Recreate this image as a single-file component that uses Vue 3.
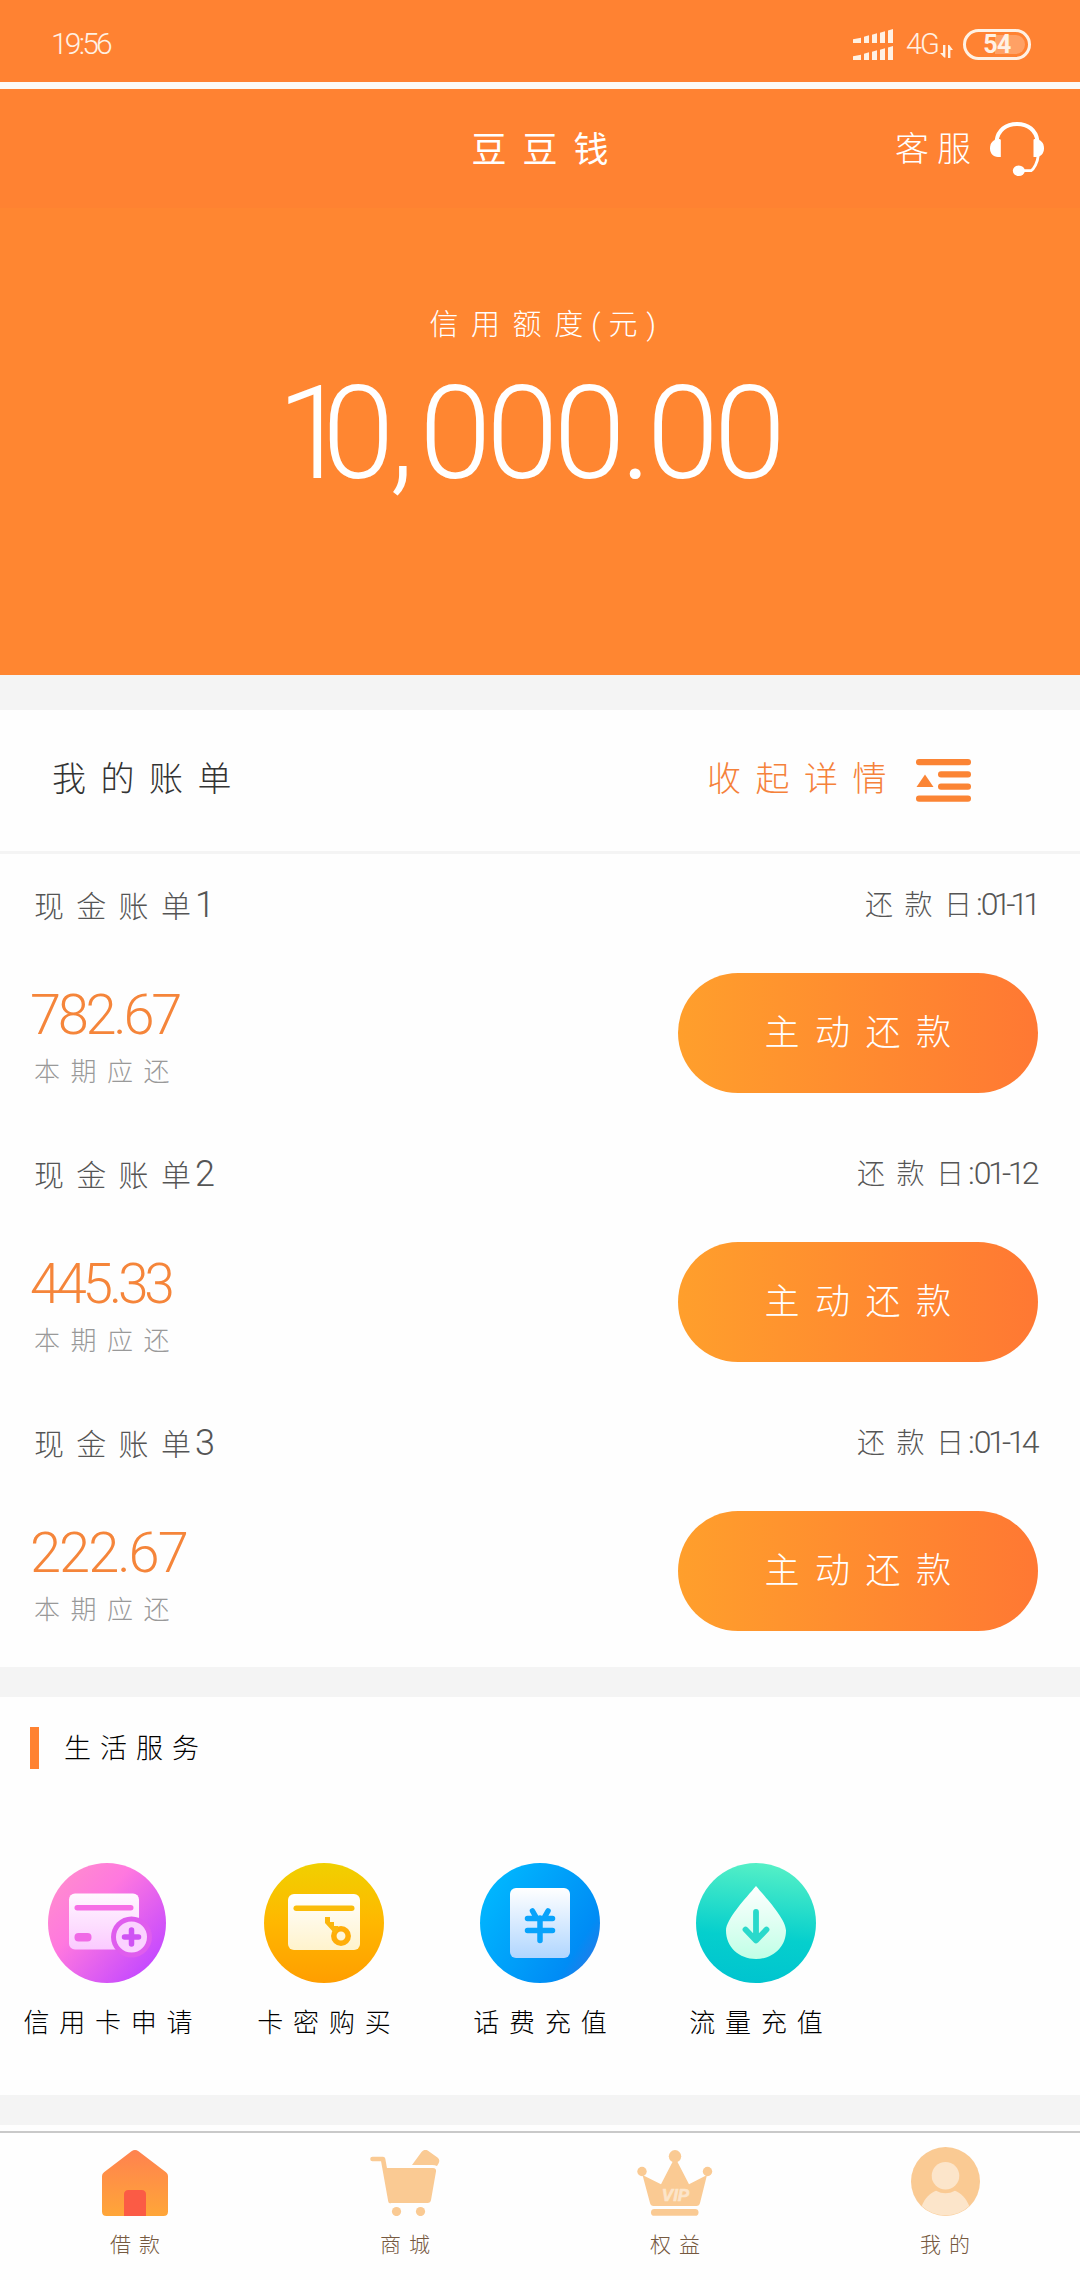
<script setup>
const signalBars = [
  { x: 0, w: 8, h: 5.3 },
  { x: 11, w: 5, h: 7.7 },
  { x: 19, w: 5, h: 9.7 },
  { x: 27, w: 5, h: 11.7 },
  { x: 35, w: 5, h: 14 },
]

const bills = [
  { no: '1', due: '01-11', amount: '782.67' },
  { no: '2', due: '01-12', amount: '445.33' },
  { no: '3', due: '01-14', amount: '222.67' },
]
</script>

<template>
  <div class="screen">
    <div class="status">
      <span class="clock">19:56</span>
      <div class="status-right">
        <svg class="signal" width="40" height="31" viewBox="0 0 40 31" fill="#fff1e4">
          <template v-for="b in signalBars" :key="b.x">
            <path :d="`M${b.x} 14V${15.5 - b.h}L${b.x + b.w} ${14 - b.h}V14Z`" />
            <path :d="`M${b.x} 31V${32.5 - b.h}L${b.x + b.w} ${31 - b.h}V31Z`" />
          </template>
        </svg>
        <span class="net">4G</span>
        <svg class="updown" width="13" height="13" viewBox="0 0 13 13" fill="#fff1e4">
          <path d="M3 0h2.400v12.500H4.200L0 8h3zM8 13h2.400V5H13L9.300 0H8z" />
        </svg>
        <div class="battery"><i></i><b>54</b></div>
      </div>
    </div>
    <div class="strip"></div>

    <header class="header">
      <span class="side"></span>
      <h1>豆豆钱</h1>
      <div class="side service">
        <span>客服</span>
        <svg width="54" height="54" viewBox="0 0 54 54">
          <path d="M6.500 19C8 8 16 2 27 2s19 6 20.500 17" fill="none" stroke="#fff" stroke-width="4" />
          <path d="M10 17C3 17 0 21 0 26.300S3 35 8 35h2.800V18z" fill="#fff" />
          <path d="M44 17C51 17 54 21 54 26.300S51 35 46 35h-2.500V18z" fill="#fff" />
          <path d="M48.300 33C47.500 41 44 47 41 48.700H33" fill="none" stroke="#fff" stroke-width="2.800" />
          <ellipse cx="28.800" cy="48.700" rx="6" ry="5.300" fill="#fff" />
        </svg>
      </div>
    </header>

    <section class="hero">
      <p class="hero-label">信用额<span class="tight">度(</span><span class="unit">元</span>)</p>
      <p class="hero-sum"><span class="one">1</span>0<span class="comma">,</span>000.00</p>
    </section>

    <section class="bills">
      <div class="bills-head">
        <h2>我的账单</h2>
        <div class="toggle">
          <span>收起详情</span>
          <svg width="55" height="43" viewBox="0 0 55 43" fill="#fb8434">
            <rect width="55" height="6.300" rx="3" />
            <rect x="22" y="12.200" width="33" height="6.300" rx="3" />
            <rect x="22" y="24.500" width="33" height="6.300" rx="3" />
            <rect y="36.500" width="55" height="6.300" rx="3" />
            <path d="M9 15.500L17.500 28H.5z" />
          </svg>
        </div>
      </div>
      <article v-for="b in bills" :key="b.no" class="bill">
        <div class="bill-top">
          <h3>现金账<span class="last">单</span><span class="num">{{ b.no }}</span></h3>
          <span class="due">还款<span class="last">日</span><span class="num"><span class="colon">:</span>{{ b.due }}</span></span>
        </div>
        <div class="bill-main">
          <div>
            <p class="amount">{{ b.amount }}</p>
            <p class="note">本期应还</p>
          </div>
          <button class="pay">主动还款</button>
        </div>
      </article>
    </section>

    <section class="life">
      <h2 class="life-title">生活服务</h2>
      <div class="services">
        <div class="service-item">
          <svg width="120" height="120" viewBox="0 0 120 120">
            <defs>
              <linearGradient id="pk" x1=".1" y1=".15" x2=".88" y2=".85"><stop offset="0" stop-color="#ff8ad0" /><stop offset=".35" stop-color="#ff78df" /><stop offset="1" stop-color="#c549ff" /></linearGradient>
              <linearGradient id="pkc" x1="0" y1="0" x2="0" y2="1"><stop offset="0" stop-color="#fff8ff" /><stop offset="1" stop-color="#fbcaff" /></linearGradient>
            </defs>
            <ellipse cx="59" cy="60" rx="59" ry="60" fill="url(#pk)" />
            <rect x="21" y="30.500" width="70" height="56" rx="6" fill="url(#pkc)" />
            <rect x="26.500" y="42" width="59" height="5.500" rx="2.700" fill="#f66ee6" />
            <rect x="26.500" y="70" width="17" height="8.500" rx="4" fill="#f06ae6" />
            <circle cx="83.500" cy="74" r="20.500" fill="#df5dee" />
            <circle cx="83.500" cy="74" r="15.500" fill="#fbd2ff" />
            <path d="M83.500 67v14M76.500 74h14" stroke="#cf52f4" stroke-width="5.500" stroke-linecap="round" />
          </svg>
          <span>信用卡申请</span>
        </div>
        <div class="service-item">
          <svg width="120" height="120" viewBox="0 0 120 120">
            <defs>
              <linearGradient id="ye" x1="0" y1="0" x2="0" y2="1"><stop offset="0" stop-color="#f0d000" /><stop offset=".5" stop-color="#ffb700" /><stop offset="1" stop-color="#ff9e00" /></linearGradient>
              <linearGradient id="yec" x1="0" y1="0" x2="0" y2="1"><stop offset="0" stop-color="#fff" /><stop offset="1" stop-color="#fff3cc" /></linearGradient>
            </defs>
            <circle cx="60" cy="60" r="60" fill="url(#ye)" />
            <rect x="24" y="31" width="72" height="56" rx="6" fill="url(#yec)" />
            <rect x="29.500" y="42.500" width="61" height="5.500" rx="2.700" fill="#fabc08" />
            <circle cx="77" cy="73" r="7.200" fill="none" stroke="#ffad08" stroke-width="5.500" />
            <path d="M61 54h5v5h4v4h4v4l-3 4-10-11z" fill="#fbb60d" />
          </svg>
          <span>卡密购买</span>
        </div>
        <div class="service-item">
          <svg width="120" height="120" viewBox="0 0 120 120">
            <defs>
              <linearGradient id="bl" x1="0" y1=".2" x2=".95" y2=".8"><stop offset="0" stop-color="#00b9ff" /><stop offset=".85" stop-color="#008cf5" /><stop offset="1" stop-color="#217de9" /></linearGradient>
              <linearGradient id="blc" x1="0" y1="0" x2="0" y2="1"><stop offset="0" stop-color="#fff" /><stop offset="1" stop-color="#b0d6ff" /></linearGradient>
            </defs>
            <circle cx="60" cy="60" r="60" fill="url(#bl)" />
            <rect x="30" y="25" width="60" height="70" rx="6" fill="url(#blc)" />
            <path d="M52.500 48l4 7M68 48l-4 7M47.500 55.500h25M47.500 67.500h25M60 55v22.500" fill="none" stroke="#08a3fb" stroke-width="5.500" stroke-linecap="round" />
          </svg>
          <span>话费充值</span>
        </div>
        <div class="service-item">
          <svg width="120" height="120" viewBox="0 0 120 120">
            <defs>
              <linearGradient id="gr" x1=".55" y1="0" x2=".45" y2="1"><stop offset="0" stop-color="#55f0c6" /><stop offset=".62" stop-color="#05cfcd" /><stop offset="1" stop-color="#00c4cf" /></linearGradient>
              <linearGradient id="grc" x1="0" y1="0" x2="0" y2="1"><stop offset="0" stop-color="#fff" /><stop offset="1" stop-color="#c0ffe6" /></linearGradient>
            </defs>
            <circle cx="60" cy="60" r="60" fill="url(#gr)" />
            <path d="M60 23C70 35 90 56 90 67.500C90 84 77 96 60 96S30 84 30 67.500C30 56 50 35 60 23z" fill="url(#grc)" />
            <path d="M60 49v26M49.500 66.500L60 77.500L70.500 66.500" fill="none" stroke="#2ad9cb" stroke-width="5.800" stroke-linecap="round" stroke-linejoin="round" />
          </svg>
          <span>流量充值</span>
        </div>
      </div>
    </section>
    <div class="gap-band"></div>

    <nav class="tabs">
      <div class="tab">
        <svg width="66" height="66" viewBox="0 0 66 66">
          <defs><linearGradient id="hs" x1="0" y1="0" x2="0" y2="1"><stop offset="0" stop-color="#ff824f" /><stop offset="1" stop-color="#ffa638" /></linearGradient></defs>
          <path d="M29.500 1.200Q33-1.200 36.500 1.200L64 22.200Q66 23.700 66 26V61.500Q66 66 61.500 66H4.500Q0 66 0 61.500V26Q0 23.700 2 22.200z" fill="url(#hs)" />
          <path d="M22 66V44.500Q22 40 26.500 40h13Q44 40 44 44.500V66z" fill="#fb5b45" />
        </svg>
        <span>借款</span>
      </div>
      <div class="tab">
        <svg width="70" height="66" viewBox="0 0 70 66" fill="#faca93">
          <path d="M2.500 9H13L20.500 51" fill="none" stroke="#faca93" stroke-width="4.600" stroke-linecap="round" stroke-linejoin="round" />
          <path d="M15 18H63Q66.500 18 66 21.500L61 50Q60.500 53 57.500 53H22Q19.200 53 18.500 50z" />
          <path d="M42 15L51.500 2Q54.500-1.500 58 .7L67.500 7.500Q70.500 10 68.500 13.500L67 16Q65 15 62 15z" />
          <circle cx="26.500" cy="61.500" r="4.600" /><circle cx="50.500" cy="61.500" r="4.600" />
        </svg>
        <span>商城</span>
      </div>
      <div class="tab">
        <svg width="76" height="66" viewBox="0 0 76 66" fill="#faca93">
          <circle cx="38" cy="6.300" r="6.200" /><circle cx="5" cy="21.500" r="4.700" /><circle cx="70.500" cy="21.500" r="4.700" />
          <path d="M5.500 25L24 34.300L35.500 12h5L52 34.300L70 25L63 53Q62.300 56 59.500 56H16.500Q13.700 56 13 53z" />
          <rect x="14" y="59" width="47.500" height="6.800" rx="3.400" />
          <text x="38.500" y="51" text-anchor="middle" class="vip">VIP</text>
        </svg>
        <span>权益</span>
      </div>
      <div class="tab">
        <svg class="avatar" width="69" height="69" viewBox="0 0 69 69">
          <circle cx="34.500" cy="34.500" r="34.500" fill="#faca93" />
          <circle cx="34.500" cy="28.700" r="13.800" fill="#fce5ca" />
          <path d="M10.700 59C14 51 19 46 25 43.700Q34.500 49 44 43.700C50 46 55 51 58.300 59A34.500 34.500 0 0 1 10.700 59z" fill="#fce5ca" />
        </svg>
        <span>我的</span>
      </div>
    </nav>
  </div>
</template>

<style>
body { margin: 0; background: #fefefe; }
</style>

<style scoped>
.screen {
  width: 1080px;
  height: 2280px;
  display: flex;
  flex-direction: column;
  overflow: hidden;
  background: #fefefe;
  font-family: Roboto, "Noto Sans CJK SC", sans-serif;
  font-weight: 300;
}
h1, h2, h3, p { margin: 0; font-weight: inherit; }
svg { display: block; flex: none; }

.status {
  height: 82px;
  box-sizing: border-box;
  padding: 0 49px 0 51px;
  display: flex;
  justify-content: space-between;
  background: #ff8232;
  color: #fff1e4;
}
.clock { font-size: 30px; line-height: 88px; letter-spacing: -2.800px; }
.status-right { display: flex; align-items: flex-start; }
.signal { margin-top: 29px; }
.net { margin-left: 13px; width: 34px; font-size: 29px; line-height: 88px; letter-spacing: -2px; }
.updown { margin-top: 45px; }
.battery {
  position: relative;
  width: 68px;
  height: 31px;
  box-sizing: border-box;
  margin: 29px 0 0 10px;
  border: 3px solid #fff1e4;
  border-radius: 16px;
  text-align: center;
}
.battery i {
  position: absolute;
  right: 3px;
  top: 3px;
  width: 30px;
  height: 19px;
  border-radius: 0 10px 10px 0;
  background: rgba(255, 255, 255, .25);
}
.battery b { position: relative; display: block; font-size: 25px; font-weight: 700; line-height: 26px; letter-spacing: -.5px; }

.strip { height: 7px; background: #fcfaf6; }

.header {
  height: 119px;
  display: flex;
  align-items: center;
  background: #ff8232;
  color: #fff;
}
.side { flex: 1 1 0; width: 0; }
.header h1 { font-size: 35px; line-height: 113px; padding-top: 3px; letter-spacing: 16px; margin-right: -16px; font-weight: 400; }
.service { display: flex; justify-content: flex-end; align-items: center; }
.service svg { margin-right: 36px; }
.service span { font-size: 34px; line-height: 50px; letter-spacing: 8px; margin-right: 11px; }

.hero { height: 467px; background: #ff8631; color: #fff; text-align: center; }
.hero-label { padding: 92px 0 0 18px; font-size: 29px; line-height: 50px; letter-spacing: 12.500px; }
.tight { letter-spacing: 8px; }
.unit { letter-spacing: 9px; }
.hero-sum { margin-top: 9px; font-size: 130px; line-height: 150px; letter-spacing: -5px; }
.one { letter-spacing: -27px; margin-left: -22px; }
.comma { letter-spacing: 5px; }

.bills { border-top: 35px solid #f4f4f4; padding-bottom: 6px; }
.bills-head {
  height: 144px;
  box-sizing: border-box;
  border-bottom: 3px solid #f4f4f4;
  padding: 0 109px 0 52px;
  display: flex;
  justify-content: space-between;
  align-items: center;
}
.bills-head h2 { font-size: 34px; line-height: 50px; padding-bottom: 3px; letter-spacing: 14.500px; color: #333; }
.toggle { display: flex; align-items: center; color: #f5813a; }
.toggle span { font-size: 34px; line-height: 50px; padding-bottom: 3px; letter-spacing: 14.500px; margin-right: 15px; }

.bill { height: 269px; }
.bill-top {
  height: 119px;
  display: flex;
  justify-content: space-between;
  padding: 0 44px 0 34px;
}
.bill-top h3 { font-size: 30px; line-height: 103px; letter-spacing: 12.300px; color: #555; }
.bill-top h3 .last { letter-spacing: 4px; }
.bill-top h3 .num { font-size: 36px; letter-spacing: 0; }
.due { font-size: 28px; line-height: 101px; letter-spacing: 11.500px; color: #555; }
.due .last { letter-spacing: 4px; }
.due .num { font-size: 32px; letter-spacing: -3.600px; }
.due .colon { letter-spacing: -1px; }
.bill:nth-of-type(1) .due .num { letter-spacing: -5px; }
.bill:nth-of-type(1) .due .colon { letter-spacing: -2px; }
.bill-main { display: flex; justify-content: space-between; padding: 0 42px 0 30px; }
.amount { font-size: 56px; line-height: 60px; letter-spacing: -3.300px; color: #f5853a; margin-top: 12px; }
.bill:nth-of-type(2) .amount { font-size: 55px; letter-spacing: -4.200px; }
.bill:nth-of-type(3) .amount { letter-spacing: -2px; }
.note { font-size: 26px; line-height: 36px; letter-spacing: 10.500px; color: #999; margin: 9px 0 0 4px; }
.pay {
  width: 360px;
  height: 120px;
  border: 0;
  padding: 0 0 7px 15px;
  border-radius: 60px;
  background: linear-gradient(90deg, #ff9f2c, #ff7833);
  color: #fff;
  font: 300 35px Roboto, "Noto Sans CJK SC", sans-serif;
  letter-spacing: 15.500px;
}

.life { height: 368px; border-top: 30px solid #f4f4f4; padding-top: 30px; }
.life-title {
  height: 42px;
  margin-left: 30px;
  padding-left: 25px;
  border-left: 9px solid #ff8232;
  font-size: 27px;
  line-height: 44px;
  letter-spacing: 9px;
  color: #000;
}
.services { display: flex; margin-top: 94px; }
.service-item { width: 216px; display: flex; flex-direction: column; align-items: center; }
.service-item span { margin-top: 20px; font-size: 26px; line-height: 40px; letter-spacing: 9.800px; margin-right: -9.800px; color: #000; white-space: nowrap; }

.gap-band { height: 30px; background: #f4f4f4; flex: none; }
.tabs { margin-top: 6px; height: 147px; border-top: 2px solid #c9c9c9; display: flex; background: #fefefe; }
.tab { flex: 1; display: flex; flex-direction: column; align-items: center; }
.tab svg { margin-top: 17px; }
.tab .avatar { margin-top: 14px; }
.tab span { margin-top: 14px; font-size: 21px; line-height: 30px; letter-spacing: 8px; margin-right: -8px; color: #76593f; }
.vip { font: italic 700 17px "Liberation Sans", sans-serif; fill: #fce5ca; stroke: #fce5ca; stroke-width: .6px; }
</style>
